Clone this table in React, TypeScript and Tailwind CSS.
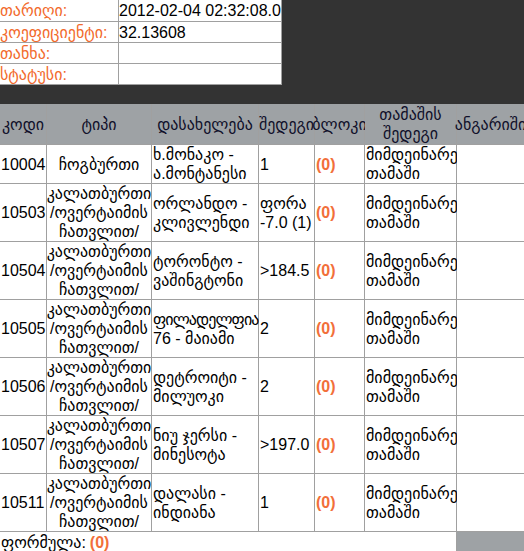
import React from 'react';

const FONT = '[font-family:"Liberation_Sans","DejaVu_Sans",sans-serif]';

const INFO = [
  { label: 'თარიღი:', value: '2012-02-04 02:32:08.0' },
  { label: 'კოეფიციენტი:', value: '32.13608' },
  { label: 'თანხა:', value: '' },
  { label: 'სტატუსი:', value: '' },
];

const BASKET = ['კალათბურთი', '/ოვერტაიმის', 'ჩათვლით/'];

const ROWS = [
  { code: '10004', type: ['ჩოგბურთი'], name: ['ხ.მონაკო -', 'ა.მონტანესი'], block: ['1'] },
  { code: '10503', type: BASKET, name: ['ორლანდო -', 'კლივლენდი'], block: ['ფორა', '-7.0 (1)'] },
  { code: '10504', type: BASKET, name: ['ტორონტო -', 'ვაშინგტონი'], block: ['>184.5'] },
  { code: '10505', type: BASKET, name: ['ფილადელფია', '76 - მაიამი'], block: ['2'], tight: true },
  { code: '10506', type: BASKET, name: ['დეტროიტი -', 'მილუოკი'], block: ['2'] },
  { code: '10507', type: BASKET, name: ['ნიუ ჯერსი -', 'მინესოტა'], block: ['>197.0'] },
  { code: '10511', type: BASKET, name: ['დალასი -', 'ინდიანა'], block: ['1'] },
];

const HEADERS = [['კოდი'], ['ტიპი'], ['დასახელება'], ['შედეგი'], ['ბლოკი'], ['თამაშის', 'შედეგი'], ['ანგარიში']];

const Lines = ({ lines, tight }: { lines: string[]; tight?: boolean }) => (
  <div>
    {lines.map((l, i) => (
      <div key={i} className={`whitespace-nowrap ${tight && i === 0 ? 'tracking-[-0.9px]' : ''}`}>
        {l}
      </div>
    ))}
  </div>
);

const Cell = ({ children, center }: { children: React.ReactNode; center?: boolean }) => (
  <div className={`flex items-center bg-white px-px ${center ? 'justify-center text-center' : ''}`}>{children}</div>
);

const App = () => {
  return (
    <div className={`h-[551px] w-[524px] overflow-hidden bg-[#333333] text-[16px] leading-[19px] text-black ${FONT}`}>
      <div className="grid w-[282px] grid-cols-[118px_162px] grid-rows-[21px_20px_20px_20px] gap-px bg-[#a0a0a0] pr-px pb-px">
        {INFO.map((row) => (
          <React.Fragment key={row.label}>
            <div className="flex items-center whitespace-nowrap bg-white text-[#f26a2c]">{row.label}</div>
            <div className="flex items-center whitespace-nowrap bg-white">{row.value}</div>
          </React.Fragment>
        ))}
      </div>

      <div className="mt-[19px] grid w-[525px] grid-cols-[46px_104px_106px_55px_49px_91px_67px] gap-px bg-[#a0a0a0] pr-px">
        {HEADERS.map((h, i) => (
          <div key={i} className="flex h-[40px] items-center justify-center bg-[#9ea2a5] text-center text-[#10102a]">
            <Lines lines={h} />
          </div>
        ))}

        {ROWS.map((r) => (
          <React.Fragment key={r.code}>
            <Cell>{r.code}</Cell>
            <Cell center>
              <Lines lines={r.type} />
            </Cell>
            <Cell>
              <Lines lines={r.name} tight={r.tight} />
            </Cell>
            <Cell>
              <Lines lines={r.block} />
            </Cell>
            <Cell>
              <span className="font-bold text-[#f26f3a]">(0)</span>
            </Cell>
            <Cell>
              <Lines lines={['მიმდეინარე', 'თამაში']} />
            </Cell>
            <Cell>{''}</Cell>
          </React.Fragment>
        ))}

        <div className="col-span-6 flex h-[20px] items-center bg-white px-px">
          ფორმულა: <span className="ml-1 font-bold text-[#f26f3a]">(0)</span>
        </div>
        <div className="bg-[#9ea2a5]" />
      </div>
    </div>
  );
};

export default App;
